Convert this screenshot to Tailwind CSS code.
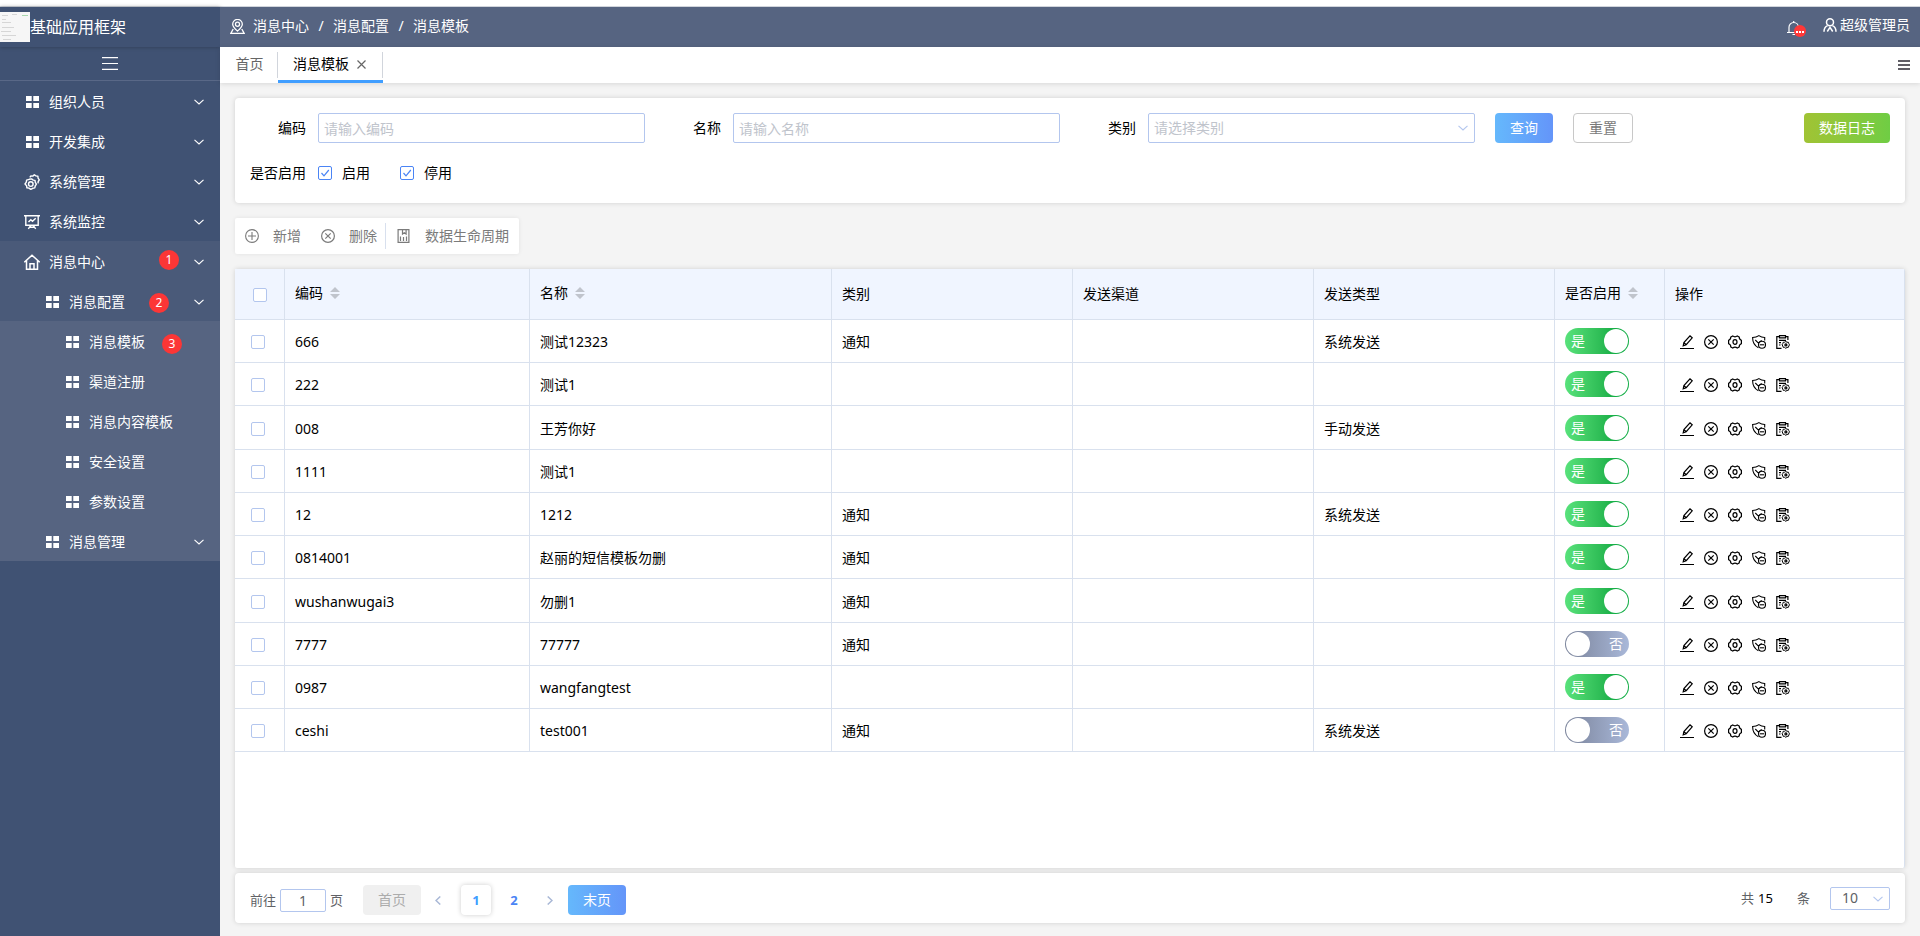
<!DOCTYPE html>
<html lang="zh-CN">
<head>
<meta charset="utf-8">
<meta name="viewport" content="width=device-width, initial-scale=1">
<title>消息模板</title>
<script src="https://cdn.jsdelivr.net/npm/@tailwindcss/browser@4"></script>
</head>
<body class="flex min-h-screen flex-col bg-white font-['Noto_Sans','Noto_Sans_CJK_SC',sans-serif] text-sm leading-5 text-black">

<svg class="hidden" aria-hidden="true">
  <symbol id="i-grid" viewBox="0 0 13 12"><path fill="currentColor" d="M0 0h5.700v5H0zM7.300 0H13v5H7.300zM0 7h5.700v5H0zM7.300 7H13v5H7.300z"/></symbol>
  <symbol id="i-down" viewBox="0 0 10 6"><path fill="none" stroke="currentColor" stroke-width="1.1" d="M.5.8 5 5 9.500.8"/></symbol>
  <symbol id="i-gears" viewBox="0 0 16 16"><g fill="none" stroke="currentColor" stroke-width="1.4" stroke-linejoin="round"><path d="M5.200 5.300 7.500 4.900 9.300 6.100 11 6.400 11.300 8.400 12.400 10.200 11.200 12 10.800 13.900 8.700 14.300 6.800 15.300 5 14.100 2.900 13.800 2.600 11.700 1 10 2.300 8.100 2.600 6.200z"/><circle cx="6.800" cy="10.100" r="2.300"/><path d="M5.800 3.400 6.900 2 8.800 2.100 10.300.8 12 1.900 13.900 2.200 14.100 4.200 15.300 5.800 14.200 7.500 14 9.300"/></g></symbol>
  <symbol id="i-board" viewBox="0 0 16 16"><g fill="none" stroke="currentColor" stroke-width="1.4"><path d="M0 1.700h16M1.800 1.700v9.600h12.400V1.700M4.500 8l2.300-2.300 1.700 1.600 3.200-3M6.800 11.500l-2.500 3.300M9.200 11.500l2.500 3.300M6.200 13.300h3.600"/></g></symbol>
  <symbol id="i-home" viewBox="0 0 16 16"><g fill="none" stroke="currentColor" stroke-width="1.500"><path d="M.3 8.300 8 1.200l7.700 7.100M2.500 6.800v8.400h11V6.800M6 15V9.800h4V15"/></g></symbol>
  <symbol id="i-pin" viewBox="0 0 14 14"><g fill="none" stroke="currentColor" stroke-width="1.200"><path d="M7 11.300C4 8.600 2.500 6.900 2.500 4.900a4.500 4.500 0 0 1 9 0C11.500 6.900 10 8.600 7 11.300z"/><circle cx="7" cy="4.900" r="1.900"/><path d="M3 9.300.8 13.400h12.400L11 9.300"/></g></symbol>
  <symbol id="i-bell" viewBox="0 0 14 14"><path fill="none" stroke="currentColor" stroke-width="1.200" d="M0 11.500h13M2 11.500V6.200a4.700 4.700 0 0 1 9.400 0v5.300M5.500 13.500h2.600M6.700 1.500V0"/></symbol>
  <symbol id="i-user" viewBox="0 0 14 14"><g fill="none" stroke="currentColor" stroke-width="1.500"><circle cx="7" cy="4.300" r="3.500"/><path d="M1 13.800c0-3 1.500-5.300 3.600-6.200M13 13.800c0-3-1.500-5.300-3.600-6.200M4.300 13.500 7 9.300l2.700 4.200"/></g></symbol>
  <symbol id="i-plus" viewBox="0 0 14 14"><g fill="none" stroke="currentColor" stroke-width="1.100"><circle cx="7" cy="7" r="6.400"/><path d="M7 3v8M3 7h8"/></g></symbol>
  <symbol id="i-x" viewBox="0 0 14 14"><g fill="none" stroke="currentColor" stroke-width="1.200"><circle cx="7" cy="7" r="6.400"/><path d="m4.300 4.300 5.400 5.400m0-5.400-5.400 5.400"/></g></symbol>
  <symbol id="i-data" viewBox="0 0 14 14"><g fill="none" stroke="currentColor" stroke-width="1.200"><path d="M1.100.6h10.800v12.800H1.100zM3.500 12V7.500M6.500 12V8M9.500 12V7.500M5.500 1v4l1.800-1.300L9.100 5V1"/></g></symbol>
  <symbol id="i-edit" viewBox="0 0 14 14"><g fill="none" stroke="currentColor" stroke-width="1.200"><path d="M0 13.500h14M3.200 10.800l.7-3.300L10 .8l2.200 2-6 6.900zM4 7.700l2.200 2"/></g></symbol>
  <symbol id="i-gear" viewBox="0 0 14 14"><g fill="none" stroke="currentColor" stroke-width="1.200" stroke-linejoin="round"><path d="M4.700.9C5.500 1.600 6.200 1.800 7 1.800s1.500-.2 2.300-.9l1.900 1.100c-.1 1.700.5 2.600 2.200 3.200v3.600c-1.700.6-2.300 1.500-2.200 3.200l-1.900 1.100C8.500 12.400 7.800 12.200 7 12.200s-1.500.2-2.300.9L2.800 12C2.900 10.300 2.300 9.400.6 8.800V5.200C2.300 4.600 2.900 3.700 2.800 2z"/><ellipse cx="7" cy="7" rx="2" ry="2.400"/></g></symbol>
  <symbol id="i-shield" viewBox="0 0 14 14"><g fill="none" stroke="currentColor" stroke-width="1.100"><path d="M12.700 5.600V2.500C10.500 2.500 8.500 1.800 6.900.6 5.200 1.800 3.200 2.500.6 2.500c0 4.700 1.200 7.900 5.800 10.200M3.300 5l3.100 3.100L9.600 5.300"/><circle cx="10" cy="9.700" r="3.500"/><path d="M7.800 9.800h4.400"/></g></symbol>
  <symbol id="i-clip" viewBox="0 0 14 14"><g fill="none" stroke="currentColor" stroke-width="1.200"><path d="M5.500 13.400H.8V1.700h2.400m6.600 0h2.100v3.300M3.500.6h6v2.200h-6zM3 5.400h7M3 7.700h2M3 10h1.500"/><path stroke-width="1" d="m9.800 6.500 1.200.7 1.400.1.400 1.300.7 1.200-.7 1.200-.4 1.300-1.400.1-1.200.9-1.200-.9-1.400-.1-.4-1.300-.7-1.200.7-1.200.4-1.300 1.400-.1z"/><circle cx="9.900" cy="9.900" r="1"/></g></symbol>
</svg>

<div class="h-[7px] border-b border-gray-300 bg-white"></div>

<div class="flex flex-1">
  <aside class="w-[220px] shrink-0 bg-[#405273] text-white">
    <div class="flex h-10 items-center shadow-[0_0_4px_rgba(0,0,0,0.3)]">
      <svg class="size-[30px] shrink-0" viewBox="0 0 30 30" aria-hidden="true"><path fill="#f6f6f6" d="M0 0h30v30H0z"/><path stroke="#d6d6d6" fill="none" d="M2 3.500h6M12 2.500h5M2 7.500h4M2 10.500h9M2 15.500h12M1 19.500h10M2 23.500h14M3 27.500h8"/><path stroke="#a9d8ae" d="M22 3.500h6"/></svg>
      <h1 class="text-base leading-6">基础应用框架</h1>
    </div>
    <button type="button" aria-label="收起菜单" class="flex h-[34px] w-full items-center justify-center border-b border-[#596887]">
      <svg class="h-[13px] w-4" viewBox="0 0 16 13"><path stroke="currentColor" stroke-width="1.200" d="M0 .6h16M0 6.500h16M0 12.400h16"/></svg>
    </button>
    <nav id="menu" aria-label="主菜单"></nav>
  </aside>

  <div class="flex min-w-0 flex-1 flex-col bg-[#f4f4f4]">
    <header class="flex h-10 items-center justify-between bg-[#566481] px-2.5 text-white">
      <nav aria-label="面包屑" class="flex items-center pb-0.5">
        <svg class="mr-2 size-[15px]"><use href="#i-pin"/></svg>
        <a href="#">消息中心</a><span class="mx-2 w-2 text-center">/</span><a href="#">消息配置</a><span class="mx-2 w-2 text-center">/</span><a href="#">消息模板</a>
      </nav>
      <div class="flex items-center">
        <button type="button" aria-label="通知" class="relative mr-4 flex w-5 pt-0.5">
          <svg class="size-3.5"><use href="#i-bell"/></svg>
          <svg class="absolute top-1.5 left-[7px] size-3" viewBox="0 0 12 12"><circle cx="6" cy="6" r="6" fill="#ff3737"/><path fill="#fff" d="M2 6h2v2H2zM5 6h2v2H5zM8 6h2v2H8z"/></svg>
        </button>
        <a href="#" class="flex items-center gap-[3px] pb-1"><svg class="size-3.5"><use href="#i-user"/></svg>超级管理员</a>
      </div>
    </header>

    <div class="flex h-9 items-start justify-between bg-white pr-2.5 shadow-[0_1px_5px_rgba(0,0,0,0.12)]">
      <div class="flex">
        <a href="#" class="mt-[5px] flex h-[26px] w-[58px] items-center justify-center border-r border-gray-300 pr-2.5 pb-0.5 pl-3 text-[#666]">首页</a>
        <div class="flex h-9 items-start border-b-[3px] border-[#409eff]">
          <div class="mt-[5px] flex h-[26px] items-center gap-2 border-r border-gray-300 pr-4 pb-0.5 pl-[15px]">
            <a href="#">消息模板</a>
            <button type="button" aria-label="关闭"><svg class="size-[9px] text-[#666]" viewBox="0 0 9 9"><path stroke="currentColor" stroke-width="1.200" d="m.5.5 8 8m0-8-8 8"/></svg></button>
          </div>
        </div>
      </div>
      <button type="button" aria-label="标签操作" class="mt-[13px]"><svg class="h-[10px] w-3" viewBox="0 0 12 10"><path fill="#605e66" d="M0 0h12v2H0zM0 4h12v2H0zM0 8h12v2H0z"/></svg></button>
    </div>

    <main class="flex flex-1 flex-col px-[15px] pt-[15px] pb-[13px]">
      <form class="flex h-[105px] flex-col gap-[13px] rounded-sm bg-white px-[15px] pt-[15px] shadow-[0_0_5px_rgba(0,0,0,0.15)]">
        <div class="flex h-[30px] items-center">
          <label for="code" class="mr-3 w-14 shrink-0 text-right">编码</label>
          <input id="code" type="text" placeholder="请输入编码" class="h-[30px] w-[327px] min-w-0 shrink rounded-xs border border-[#b3c6ee] px-[5px] text-sm outline-none placeholder:text-[#c0c4cc]">
          <label for="name" class="mr-3 ml-[31px] w-[45px] shrink-0 text-right">名称</label>
          <input id="name" type="text" placeholder="请输入名称" class="h-[30px] w-[327px] min-w-0 shrink rounded-xs border border-[#b3c6ee] px-[5px] text-sm outline-none placeholder:text-[#c0c4cc]">
          <label for="kind" class="mr-3 ml-[31px] w-[45px] shrink-0 text-right">类别</label>
          <div class="relative w-[327px] min-w-0 shrink">
            <select id="kind" class="block h-[30px] w-full appearance-none rounded-xs border border-[#b3c6ee] bg-white px-[5px] text-sm text-[#c0c4cc] outline-none"><option>请选择类别</option></select>
            <svg class="pointer-events-none absolute top-3 right-[7px] h-1.5 w-2.5 text-[#b3c6ee]"><use href="#i-down"/></svg>
          </div>
          <button type="button" class="ml-5 h-[30px] w-[58px] shrink-0 rounded-sm bg-linear-to-r from-[#65b8fc] to-[#6495f9] text-white">查询</button>
          <button type="reset" class="ml-5 h-[30px] w-[60px] shrink-0 rounded-sm border border-[#c8c8c8] bg-white text-[#7a7a7a]">重置</button>
          <button type="button" class="ml-auto h-[30px] w-[86px] shrink-0 rounded-sm bg-linear-to-r from-[#a0c334] to-[#6fcd44] text-white">数据日志</button>
        </div>
        <div role="group" aria-labelledby="enabled" class="flex h-[34px] items-center">
          <span id="enabled" class="mr-3 w-14 text-right">是否启用</span>
          <label class="mr-[30px] flex items-center gap-2.5"><span class="relative size-3.5"><input type="checkbox" checked class="peer block size-3.5 appearance-none rounded-xs border border-[#b3c6ee] bg-white checked:border-[#4a84f5]"><svg class="pointer-events-none absolute inset-0 hidden size-3.5 peer-checked:block" viewBox="0 0 14 14"><path fill="none" stroke="#4a84f5" stroke-width="1.200" d="m3.500 7 2.500 2.800L10.800 4"/></svg></span>启用</label>
          <label class="flex items-center gap-2.5"><span class="relative size-3.5"><input type="checkbox" checked class="peer block size-3.5 appearance-none rounded-xs border border-[#b3c6ee] bg-white checked:border-[#4a84f5]"><svg class="pointer-events-none absolute inset-0 hidden size-3.5 peer-checked:block" viewBox="0 0 14 14"><path fill="none" stroke="#4a84f5" stroke-width="1.200" d="m3.500 7 2.500 2.800L10.800 4"/></svg></span>停用</label>
        </div>
      </form>

      <div class="mt-[15px] flex h-9 items-center self-start rounded-xs bg-white px-2.5 text-[#7b7b7b] shadow-[0_0_4px_rgba(0,0,0,0.08)]">
        <button type="button" class="flex items-center gap-3.5"><svg class="size-3.5"><use href="#i-plus"/></svg>新增</button>
        <button type="button" class="ml-5 flex items-center gap-3.5 pr-2"><svg class="size-3.5"><use href="#i-x"/></svg>删除</button>
        <button type="button" class="flex h-[26px] items-center gap-3.5 border-l border-[#d8e0ee] pl-[11px]"><svg class="size-3.5"><use href="#i-data"/></svg>数据生命周期</button>
      </div>

      <section class="mt-[15px] flex-1 rounded-xs border-r border-[#d9e1ee] bg-white shadow-[0_0_5px_rgba(0,0,0,0.15)]">
        <table class="w-full table-fixed border-separate border-spacing-0 text-left">
          <colgroup><col class="w-[50px]"><col class="w-[245px]"><col class="w-[302px]"><col class="w-[241px]"><col class="w-[241px]"><col class="w-[241px]"><col class="w-[110px]"><col></colgroup>
          <thead class="bg-[#f0f5ff]">
            <tr class="h-[51px] *:border-r *:border-b *:border-[#d9e1ee] *:px-2.5 *:font-normal *:last:border-r-0">
              <th scope="col" class="pt-0.5"><input type="checkbox" aria-label="全选" class="ml-2 block size-3.5 appearance-none rounded-xs border border-[#b3c6ee] bg-white"></th>
              <th scope="col" class="pb-0.5"><button type="button" class="flex items-center gap-[7px]">编码<svg class="h-3 w-2.5" viewBox="0 0 10 12"><path fill="#c0c4cc" d="M5 0l5 5H0zM5 12l5-5H0z"/></svg></button></th>
              <th scope="col" class="pb-0.5"><button type="button" class="flex items-center gap-[7px]">名称<svg class="h-3 w-2.5" viewBox="0 0 10 12"><path fill="#c0c4cc" d="M5 0l5 5H0zM5 12l5-5H0z"/></svg></button></th>
              <th scope="col">类别</th>
              <th scope="col">发送渠道</th>
              <th scope="col">发送类型</th>
              <th scope="col" class="pb-0.5"><button type="button" class="flex items-center gap-[7px]">是否启用<svg class="h-3 w-2.5" viewBox="0 0 10 12"><path fill="#c0c4cc" d="M5 0l5 5H0zM5 12l5-5H0z"/></svg></button></th>
              <th scope="col">操作</th>
            </tr>
          </thead>
          <tbody id="rows"></tbody>
        </table>
      </section>

      <footer class="mt-[5px] flex h-[50px] items-center justify-between rounded-sm bg-white px-[15px] text-[13px] text-[#606266] shadow-[0_0_5px_rgba(0,0,0,0.15)]">
        <div class="flex items-center pt-1">
          <label for="page">前往</label>
          <input id="page" type="text" value="1" class="mx-1 h-[23px] w-[46px] rounded-xs border border-[#b3c6ee] text-center text-sm outline-none">
          <span>页</span>
          <button type="button" disabled class="ml-5 h-[30px] w-[58px] rounded-sm bg-[#f0f0f0] text-sm text-[#acacac]">首页</button>
          <button type="button" aria-label="上一页" class="ml-3.5 text-[#a9b8d6]"><svg class="h-[9px] w-[6px]" viewBox="0 0 6 9"><path fill="none" stroke="currentColor" stroke-width="1.500" d="M5.300.5 1 4.500l4.300 4"/></svg></button>
          <button type="button" aria-current="page" class="ml-5 size-[30px] rounded-sm bg-white font-bold text-[#409eff] shadow-[0_0_5px_rgba(0,0,0,0.2)]">1</button>
          <button type="button" class="ml-2 size-[30px] font-bold text-[#4a84f5]">2</button>
          <button type="button" aria-label="下一页" class="ml-[18px] text-[#a9b8d6]"><svg class="h-[9px] w-[6px]" viewBox="0 0 6 9"><path fill="none" stroke="currentColor" stroke-width="1.500" d="m.7.5 4.300 4-4.300 4"/></svg></button>
          <button type="button" class="ml-[15px] h-[30px] w-[58px] rounded-sm bg-linear-to-r from-[#65b8fc] to-[#6495f9] text-sm text-white">末页</button>
        </div>
        <div class="flex items-center">
          <span>共</span><span class="ml-1 text-black">15</span><span class="ml-6">条</span>
          <div class="relative ml-5 w-[60px]">
            <select aria-label="每页条数" class="block h-[23px] w-full appearance-none rounded-xs border border-[#b3c6ee] bg-white pl-[11px] text-sm leading-5 outline-none"><option>10</option></select>
            <svg class="pointer-events-none absolute top-[9px] right-[7px] h-1.5 w-2.5 text-[#b3c6ee]"><use href="#i-down"/></svg>
          </div>
        </div>
      </footer>
    </main>
  </div>
</div>

<script>
const menu = [
  {t:'组织人员', icon:'grid', level:1, open:true},
  {t:'开发集成', icon:'grid', level:1, open:true},
  {t:'系统管理', icon:'gears', level:1, open:true},
  {t:'系统监控', icon:'board', level:1, open:true},
  {t:'消息中心', icon:'home', level:1, open:true, bg:'bg-[#4a5a79]', badge:['1','left-[159px] top-[9px]']},
  {t:'消息配置', icon:'grid', level:2, open:true, bg:'bg-[#4a5a79]', badge:['2','left-[149px] top-3']},
  {t:'消息模板', icon:'grid', level:3, bg:'bg-[#566481]', badge:['3','left-[162px] top-[13px]']},
  {t:'渠道注册', icon:'grid', level:3, bg:'bg-[#566481]'},
  {t:'消息内容模板', icon:'grid', level:3, bg:'bg-[#566481]'},
  {t:'安全设置', icon:'grid', level:3, bg:'bg-[#566481]'},
  {t:'参数设置', icon:'grid', level:3, bg:'bg-[#566481]'},
  {t:'消息管理', icon:'grid', level:2, open:true, bg:'bg-[#566481]'},
];
const indent = {1:'pl-6', 2:'pl-11', 3:'pl-16'};
document.getElementById('menu').innerHTML = menu.map(m => `
  <a href="#" class="relative flex h-10 items-center pr-4 pt-0.5 ${indent[m.level]} ${m.bg || ''}">
    <span class="mr-2 w-[17px]">${m.icon === 'grid'
      ? '<svg class="ml-0.5 h-3 w-[13px]"><use href="#i-grid"/></svg>'
      : `<svg class="size-4"><use href="#i-${m.icon}"/></svg>`}</span>
    <span>${m.t}</span>
    ${m.open ? '<svg class="ml-auto h-1.5 w-2.5"><use href="#i-down"/></svg>' : ''}
    ${m.badge ? `<span class="absolute ${m.badge[1]} flex size-5 items-center justify-center rounded-full bg-[#fc3636] text-xs">${m.badge[0]}</span>` : ''}
  </a>`).join('');

const data = [
  ['666','测试12323','通知','系统发送',true],
  ['222','测试1','','',true],
  ['008','王芳你好','','手动发送',true],
  ['1111','测试1','','',true],
  ['12','1212','通知','系统发送',true],
  ['0814001','赵丽的短信模板勿删','通知','',true],
  ['wushanwugai3','勿删1','通知','',true],
  ['7777','77777','通知','',false],
  ['0987','wangfangtest','','',true],
  ['ceshi','test001','通知','系统发送',false],
];
const actions = [['edit','编辑'],['x','删除'],['gear','设置'],['shield','停用'],['clip','日志']];
document.getElementById('rows').innerHTML = data.map(([code,name,kind,type,on]) => `
  <tr class="h-[43px] nth-[4n+3]:h-11 *:border-r *:border-b *:border-[#d9e1ee] *:px-2.5 *:pt-0.5 *:pb-0 *:last:border-r-0">
    <td><input type="checkbox" aria-label="选择 ${code}" class="ml-1.5 block size-3.5 appearance-none rounded-xs border border-[#b3c6ee] bg-white"></td>
    <td>${code}</td><td>${name}</td><td>${kind}</td><td></td><td>${type}</td>
    <td class="pt-0!"><label class="flex h-[26px] w-16 cursor-pointer items-center justify-between rounded-full bg-linear-to-r from-[#7a839a] to-[#a9b8d9] pr-1.5 pl-px text-white has-checked:flex-row-reverse has-checked:from-[#58e27b] has-checked:from-0% has-checked:to-[#12ad45] has-checked:to-80% has-checked:pr-px has-checked:pl-1.5">
      <input type="checkbox" role="switch" ${on ? 'checked' : ''} class="size-6 appearance-none rounded-full bg-white"><span>${on ? '是' : '否'}</span></label></td>
    <td><div class="flex gap-2.5 pl-[5px]">${actions.map(([i,l]) => `<button type="button" aria-label="${l}"><svg class="size-3.5"><use href="#i-${i}"/></svg></button>`).join('')}</div></td>
  </tr>`).join('');
</script>
</body>
</html>
